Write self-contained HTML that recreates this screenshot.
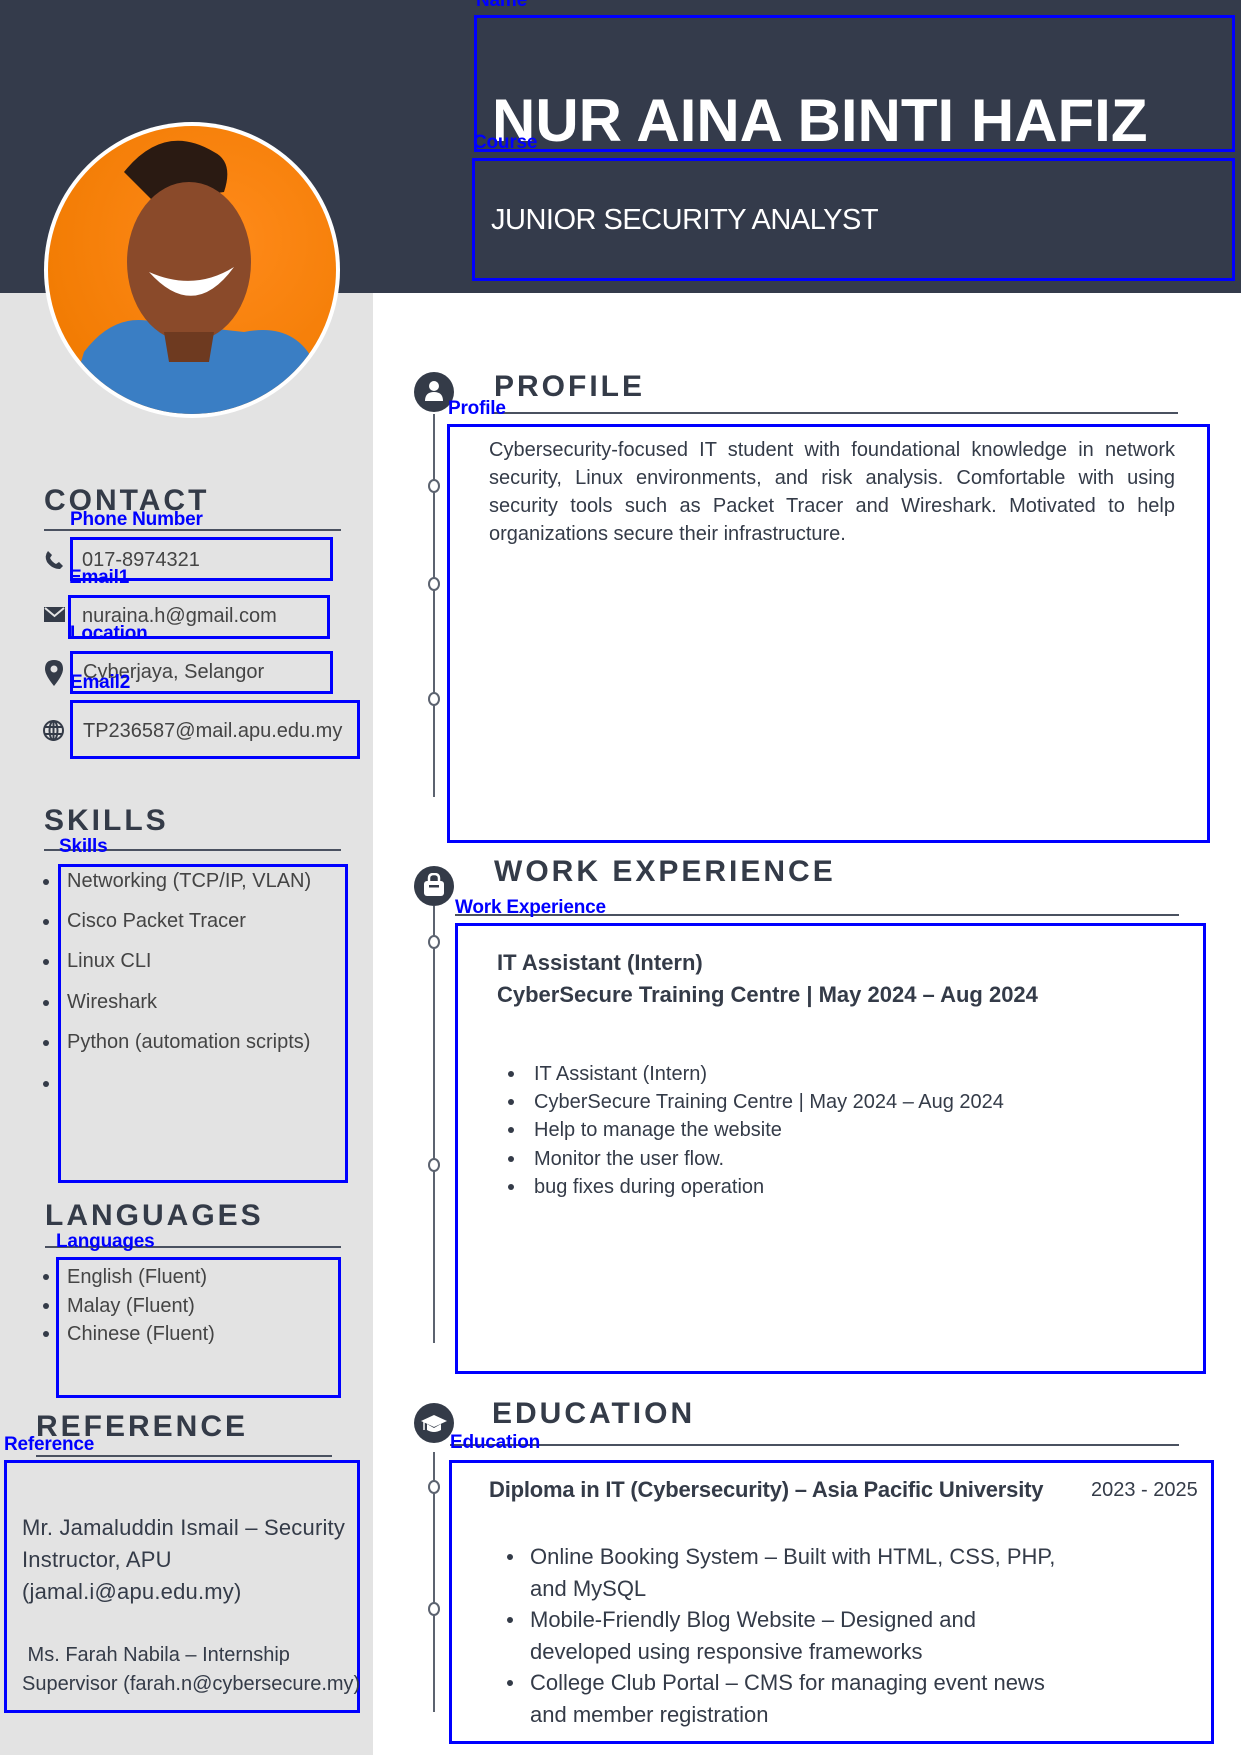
<!DOCTYPE html>
<html><head><meta charset="utf-8">
<style>
*{margin:0;padding:0;box-sizing:border-box}
body{width:1241px;height:1755px;position:relative;overflow:hidden;background:#fff;font-family:"Liberation Sans",sans-serif;color:#343b48}
.a{position:absolute;white-space:nowrap}
.bx{position:absolute;border:3px solid #0000ff}
.lb{position:absolute;color:#0000ff;font-weight:bold;font-size:19px;white-space:nowrap;letter-spacing:-0.2px}
.h{position:absolute;font-weight:bold;font-size:30px;letter-spacing:3px;color:#343b48;line-height:32px}
.ul{position:absolute;height:2px;background:#4a5160}
.vl{position:absolute;width:2px;background:#5c6370;left:433px}
.dot{position:absolute;width:12px;height:14px;border:2px solid #5c6370;border-radius:50%;background:#fff;left:428px}
.ic{position:absolute;width:40px;height:40px;border-radius:50%;background:#343b48;left:414px}
.bul{position:absolute;width:6px;height:6px;border-radius:50%;background:#343b48}
</style></head><body>
<div class="a" style="left:0;top:0;width:1241px;height:293px;background:#343b4b"></div>
<div class="a" style="left:0;top:293px;width:373px;height:1462px;background:#e3e3e3"></div>

<svg class="a" style="left:44px;top:122px" width="296" height="296" viewBox="0 0 296 296">
<defs><radialGradient id="og" cx="0.6" cy="0.4" r="0.7"><stop offset="0" stop-color="#ff8a1a"/><stop offset="1" stop-color="#f07a00"/></radialGradient>
<clipPath id="c"><circle cx="148" cy="148" r="144"/></clipPath></defs>
<circle cx="148" cy="148" r="148" fill="#fff"/>
<g clip-path="url(#c)">
<rect width="296" height="296" fill="url(#og)"/>
<path d="M20 296 L40 230 Q70 190 110 200 L200 210 Q250 200 270 240 L290 296Z" fill="#3a7ec4"/>
<path d="M80 50 Q120 0 170 30 Q190 40 180 70 L110 80Z" fill="#2a1a12"/>
<ellipse cx="145" cy="140" rx="62" ry="80" fill="#8a4a2a"/>
<path d="M105 150 Q150 200 190 145 Q150 170 105 150Z" fill="#fff"/>
<path d="M120 210 L170 210 L165 240 L125 240Z" fill="#6e3a20"/>
</g></svg>

<div class="lb" style="left:476px;top:-10px">Name</div>
<div class="bx" style="left:474px;top:15px;width:761px;height:137px"></div>
<div class="a" style="left:492px;top:90px;font-size:60px;font-weight:bold;color:#fff;letter-spacing:0px;line-height:62px">NUR AINA BINTI HAFIZ</div>
<div class="lb" style="left:473px;top:132px">Course</div>
<div class="bx" style="left:472px;top:158px;width:763px;height:123px"></div>
<div class="a" style="left:491px;top:204px;font-size:29px;color:#fff;line-height:32px;letter-spacing:-0.5px">JUNIOR SECURITY ANALYST</div>

<div class="h" style="left:44px;top:485px">CONTACT</div>
<div class="ul" style="left:44px;top:529px;width:297px"></div>
<div class="lb" style="left:70px;top:509px">Phone Number</div>
<div class="bx" style="left:70px;top:537px;width:263px;height:44px"></div>
<div class="a" style="left:82px;top:549px;font-size:20px;color:#444">017-8974321</div>
<svg class="a" style="left:44px;top:550px" width="20" height="20" viewBox="0 0 20 20"><path d="M4 1 L8 5 L6 8 Q8 12 12 14 L15 12 L19 16 L16 19 Q8 19 3 12 Q0 6 4 1Z" fill="#343b48"/></svg>
<div class="lb" style="left:69px;top:567px">Email1</div>
<div class="bx" style="left:68px;top:595px;width:262px;height:44px"></div>
<div class="a" style="left:82px;top:605px;font-size:20px;color:#444">nuraina.h@gmail.com</div>
<svg class="a" style="left:44px;top:607px" width="21" height="15" viewBox="0 0 21 15"><rect width="21" height="15" fill="#343b48"/><path d="M1 1 L10.5 9 L20 1" stroke="#e3e3e3" stroke-width="2" fill="none"/></svg>
<div class="lb" style="left:70px;top:623px">Location</div>
<div class="bx" style="left:70px;top:651px;width:263px;height:43px"></div>
<div class="a" style="left:83px;top:661px;font-size:20px;color:#444">Cyberjaya, Selangor</div>
<svg class="a" style="left:45px;top:660px" width="18" height="26" viewBox="0 0 18 26"><path d="M9 0 Q18 0 18 9 Q18 15 9 26 Q0 15 0 9 Q0 0 9 0Z" fill="#343b48"/><circle cx="9" cy="9" r="3.5" fill="#e3e3e3"/></svg>
<div class="lb" style="left:70px;top:672px">Email2</div>
<div class="bx" style="left:70px;top:700px;width:290px;height:59px"></div>
<div class="a" style="left:83px;top:720px;font-size:20px;color:#444">TP236587@mail.apu.edu.my</div>
<svg class="a" style="left:43px;top:720px" width="21" height="21" viewBox="0 0 21 21"><circle cx="10.5" cy="10.5" r="9.5" fill="none" stroke="#343b48" stroke-width="2"/><ellipse cx="10.5" cy="10.5" rx="4" ry="9.5" fill="none" stroke="#343b48" stroke-width="2"/><path d="M1 7H20M1 14H20M10.5 1V20" stroke="#343b48" stroke-width="2"/></svg>

<div class="h" style="left:44px;top:805px">SKILLS</div>
<div class="ul" style="left:44px;top:849px;width:297px"></div>
<div class="lb" style="left:59px;top:836px">Skills</div>
<div class="bx" style="left:58px;top:864px;width:290px;height:319px"></div>
<div class="bul" style="left:43px;top:879px"></div><div class="a" style="left:67px;top:870px;font-size:20px;color:#444">Networking (TCP/IP, VLAN)</div>
<div class="bul" style="left:43px;top:919px"></div><div class="a" style="left:67px;top:910px;font-size:20px;color:#444">Cisco Packet Tracer</div>
<div class="bul" style="left:43px;top:959px"></div><div class="a" style="left:67px;top:950px;font-size:20px;color:#444">Linux CLI</div>
<div class="bul" style="left:43px;top:1000px"></div><div class="a" style="left:67px;top:991px;font-size:20px;color:#444">Wireshark</div>
<div class="bul" style="left:43px;top:1040px"></div><div class="a" style="left:67px;top:1031px;font-size:20px;color:#444">Python (automation scripts)</div>
<div class="bul" style="left:43px;top:1081px"></div>

<div class="h" style="left:45px;top:1200px">LANGUAGES</div>
<div class="ul" style="left:45px;top:1246px;width:296px"></div>
<div class="lb" style="left:56px;top:1231px">Languages</div>
<div class="bx" style="left:56px;top:1257px;width:285px;height:141px"></div>
<div class="bul" style="left:43px;top:1274px"></div><div class="a" style="left:67px;top:1266px;font-size:20px;color:#444">English (Fluent)</div>
<div class="bul" style="left:43px;top:1303px"></div><div class="a" style="left:67px;top:1295px;font-size:20px;color:#444">Malay (Fluent)</div>
<div class="bul" style="left:43px;top:1331px"></div><div class="a" style="left:67px;top:1323px;font-size:20px;color:#444">Chinese (Fluent)</div>

<div class="h" style="left:36px;top:1411px">REFERENCE</div>
<div class="ul" style="left:36px;top:1455px;width:296px"></div>
<div class="lb" style="left:4px;top:1434px">Reference</div>
<div class="bx" style="left:4px;top:1460px;width:356px;height:253px"></div>
<div class="a" style="left:22px;top:1512px;font-size:22px;line-height:32px;color:#343b48;letter-spacing:0.2px">Mr. Jamaluddin Ismail – Security<br>Instructor, APU<br>(jamal.i@apu.edu.my)</div>
<div class="a" style="left:22px;top:1641px;font-size:20px;line-height:29px;color:#343b48">&nbsp;Ms. Farah Nabila – Internship<br>Supervisor (farah.n@cybersecure.my)</div>

<div class="ic" style="top:372px"></div>
<svg class="a" style="left:424px;top:380px" width="20" height="22" viewBox="0 0 20 22"><circle cx="10" cy="6" r="5" fill="#fff"/><path d="M1 21 Q1 12 10 12 Q19 12 19 21Z" fill="#fff"/></svg>
<div class="h" style="left:494px;top:371px">PROFILE</div>
<div class="ul" style="left:492px;top:412px;width:686px"></div>
<div class="lb" style="left:448px;top:398px">Profile</div>
<div class="vl" style="top:414px;height:383px"></div>
<div class="dot" style="top:479px"></div><div class="dot" style="top:577px"></div><div class="dot" style="top:692px"></div>
<div class="bx" style="left:447px;top:424px;width:763px;height:419px"></div>
<div class="a" style="left:489px;top:436px;width:686px;white-space:normal;text-align:justify;font-size:20px;line-height:28px;color:#343b48">Cybersecurity-focused IT student with foundational knowledge in network security, Linux environments, and risk analysis. Comfortable with using security tools such as Packet Tracer and Wireshark. Motivated to help organizations secure their infrastructure.</div>

<div class="ic" style="top:866px"></div>
<svg class="a" style="left:423px;top:873px" width="22" height="24" viewBox="0 0 22 24"><path d="M6 9 V5 Q6 1 11 1 Q16 1 16 5 V9" stroke="#fff" stroke-width="2.5" fill="none"/><rect x="1" y="8" width="20" height="15" rx="3" fill="#fff"/><rect x="6" y="12" width="10" height="2.5" fill="#343b48"/></svg>
<div class="h" style="left:494px;top:856px">WORK EXPERIENCE</div>
<div class="ul" style="left:455px;top:914px;width:724px"></div>
<div class="lb" style="left:455px;top:897px">Work Experience</div>
<div class="vl" style="top:906px;height:437px"></div>
<div class="dot" style="top:935px"></div><div class="dot" style="top:1158px"></div>
<div class="bx" style="left:455px;top:923px;width:751px;height:451px"></div>
<div class="a" style="left:497px;top:947px;font-size:22px;font-weight:bold;line-height:32px;color:#343b48">IT Assistant (Intern)<br>CyberSecure Training Centre | May 2024 – Aug 2024</div>
<div class="a" style="left:534px;top:1060px;font-size:20px;line-height:28.2px;color:#343b48">IT Assistant (Intern)<br>CyberSecure Training Centre | May 2024 – Aug 2024<br>Help to manage the website<br>Monitor the user flow.<br>bug fixes during operation</div>
<div class="bul" style="left:508px;top:1071px"></div><div class="bul" style="left:508px;top:1099px"></div><div class="bul" style="left:508px;top:1127px"></div><div class="bul" style="left:508px;top:1156px"></div><div class="bul" style="left:508px;top:1184px"></div>

<div class="ic" style="top:1403px"></div>
<svg class="a" style="left:420px;top:1413px" width="28" height="22" viewBox="0 0 28 22"><path d="M14 2 L27 8 L14 14 L1 8Z" fill="#fff"/><path d="M7 11 V17 Q14 21 21 17 V11 L14 15Z" fill="#fff"/><path d="M4 9 V17" stroke="#fff" stroke-width="1.5"/></svg>
<div class="h" style="left:492px;top:1398px">EDUCATION</div>
<div class="ul" style="left:450px;top:1444px;width:729px"></div>
<div class="lb" style="left:450px;top:1432px">Education</div>
<div class="vl" style="top:1452px;height:260px"></div>
<div class="dot" style="top:1480px"></div><div class="dot" style="top:1602px"></div>
<div class="bx" style="left:449px;top:1460px;width:765px;height:284px"></div>
<div class="a" style="left:489px;top:1477px;font-size:22px;font-weight:bold;color:#343b48;letter-spacing:-0.2px">Diploma in IT (Cybersecurity) – Asia Pacific University</div>
<div class="a" style="left:1091px;top:1479px;font-size:20px;color:#343b48">2023 - 2025</div>
<div class="a" style="left:530px;top:1541px;font-size:22px;line-height:31.5px;color:#343b48">Online Booking System – Built with HTML, CSS, PHP,<br>and MySQL<br>Mobile-Friendly Blog Website – Designed and<br>developed using responsive frameworks<br>College Club Portal – CMS for managing event news<br>and member registration</div>
<div class="bul" style="left:507px;top:1554px"></div><div class="bul" style="left:507px;top:1617px"></div><div class="bul" style="left:507px;top:1680px"></div>
</body></html>
